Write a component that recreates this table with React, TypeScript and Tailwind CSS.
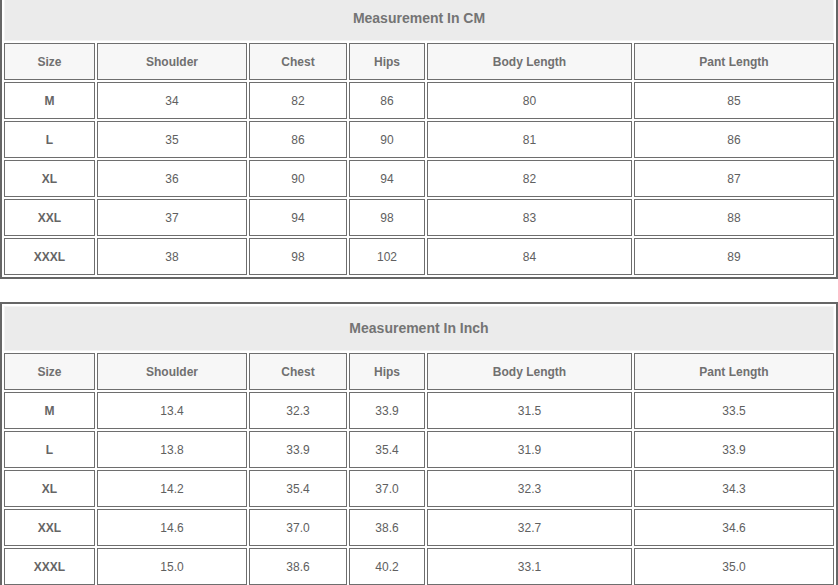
const columns = ['Size', 'Shoulder', 'Chest', 'Hips', 'Body Length', 'Pant Length'];

const cmRows = [
  ['M', '34', '82', '86', '80', '85'],
  ['L', '35', '86', '90', '81', '86'],
  ['XL', '36', '90', '94', '82', '87'],
  ['XXL', '37', '94', '98', '83', '88'],
  ['XXXL', '38', '98', '102', '84', '89'],
];

const inchRows = [
  ['M', '13.4', '32.3', '33.9', '31.5', '33.5'],
  ['L', '13.8', '33.9', '35.4', '31.9', '33.9'],
  ['XL', '14.2', '35.4', '37.0', '32.3', '34.3'],
  ['XXL', '14.6', '37.0', '38.6', '32.7', '34.6'],
  ['XXXL', '15.0', '38.6', '40.2', '33.1', '35.0'],
];

type SizeTableProps = {
  title: string;
  rows: string[][];
  className?: string;
};

function SizeTable({ title, rows, className = '' }: SizeTableProps) {
  return (
    <div
      className={`grid grid-cols-[91px_150px_98px_76px_205px_1fr] gap-[2px] p-[2px] border-2 border-[#666] bg-white ${className}`}
    >
      <div className="col-span-6 h-[45px] flex items-center justify-center bg-[#ebebeb] border border-[#f4f4f4] text-[14px] font-bold text-[#747474]">
        {title}
      </div>
      {columns.map((col) => (
        <div
          key={col}
          className="h-[37px] flex items-center justify-center bg-[#f7f7f7] border border-[#6e6e6e] text-[12px] font-bold text-[#707070]"
        >
          {col}
        </div>
      ))}
      {rows.map((row) =>
        row.map((cell, i) => (
          <div
            key={row[0] + i}
            className={`h-[37px] flex items-center justify-center bg-white border border-[#6e6e6e] text-[12px] ${
              i === 0 ? 'font-bold text-[#656565]' : 'text-[#606060]'
            }`}
          >
            {cell}
          </div>
        ))
      )}
    </div>
  );
}

export default function App() {
  return (
    <div className="w-[838px] bg-white font-['Liberation_Sans',Arial,sans-serif]">
      <SizeTable title="Measurement In CM" rows={cmRows} className="-mt-[8px]" />
      <SizeTable title="Measurement In Inch" rows={inchRows} className="mt-[23px]" />
    </div>
  );
}
